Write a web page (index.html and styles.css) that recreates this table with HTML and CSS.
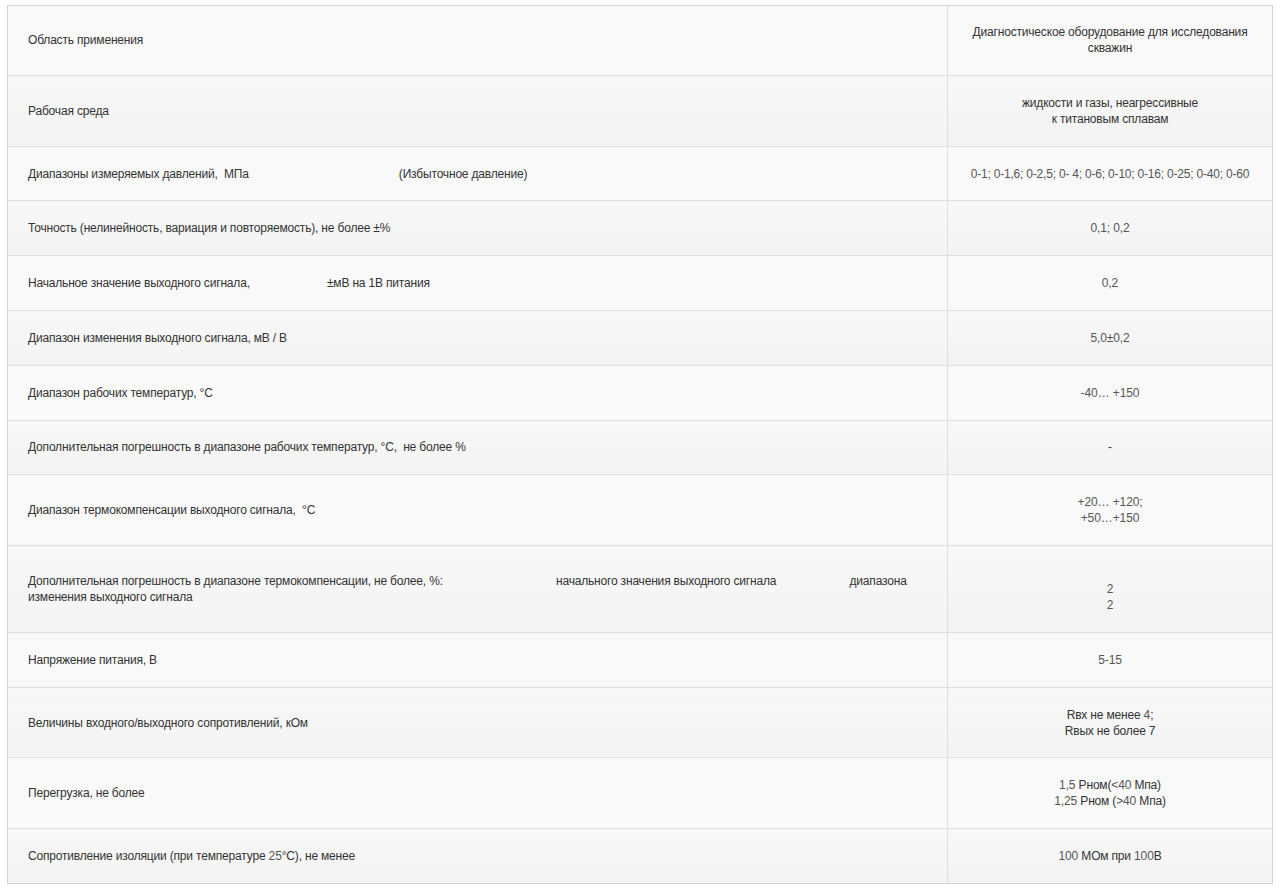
FILE: index.html
```html
<!DOCTYPE html>
<html lang="ru">
<head>
<meta charset="utf-8">
<title>Технические характеристики</title>
<link rel="stylesheet" href="styles.css">
</head>
<body>
<table class="spec">
  <tbody>
    <tr class="odd first">
      <td class="name">Область применения</td>
      <td class="val">Диагностическое оборудование для исследования скважин</td>
    </tr>
    <tr class="even">
      <td class="name">Рабочая среда</td>
      <td class="val">жидкости и газы, неагрессивные<br>к титановым сплавам</td>
    </tr>
    <tr class="odd">
      <td class="name">Диапазоны измеряемых давлений,&nbsp; МПа <span class="after g1">(Избыточное давление)</span></td>
      <td class="val"><span class="num nowrap">0-1; 0-1,6; 0-2,5; 0- 4; 0-6; 0-10; 0-16; 0-25; 0-40; 0-60</span></td>
    </tr>
    <tr class="even">
      <td class="name">Точность (нелинейность, вариация и повторяемость), не более ±%</td>
      <td class="val"><span class="num">0,1; 0,2</span></td>
    </tr>
    <tr class="odd">
      <td class="name">Начальное значение выходного сигнала, <span class="after g2">±мВ на 1В питания</span></td>
      <td class="val"><span class="num">0,2</span></td>
    </tr>
    <tr class="even">
      <td class="name">Диапазон изменения выходного сигнала, мВ / В</td>
      <td class="val"><span class="num">5,0±0,2</span></td>
    </tr>
    <tr class="odd">
      <td class="name">Диапазон рабочих температур, °С</td>
      <td class="val"><span class="num">-40… +150</span></td>
    </tr>
    <tr class="even">
      <td class="name">Дополнительная погрешность в диапазоне рабочих температур, °С,&nbsp; не более %</td>
      <td class="val">-</td>
    </tr>
    <tr class="odd">
      <td class="name">Диапазон термокомпенсации выходного сигнала,&nbsp; °С</td>
      <td class="val"><span class="num">+20… +120;<br>+50…+150</span></td>
    </tr>
    <tr class="even">
      <td class="name">Дополнительная погрешность в диапазоне термокомпенсации, не более, %: <span class="after g3">начального значения выходного сигнала</span> <span class="after g4">диапазона</span> изменения выходного сигнала</td>
      <td class="val"><br><span class="num">2<br>2</span></td>
    </tr>
    <tr class="odd">
      <td class="name">Напряжение питания, В</td>
      <td class="val"><span class="num">5-15</span></td>
    </tr>
    <tr class="even">
      <td class="name">Величины входного/выходного сопротивлений, кОм</td>
      <td class="val">Rвх не менее <span class="num">4</span>;<br>Rвых не более 7</td>
    </tr>
    <tr class="odd">
      <td class="name">Перегрузка, не более</td>
      <td class="val"><span class="num">1,5</span> Pном(<span class="num">&lt;40</span> Мпа)<br><span class="num">1,25</span> Pном (<span class="num">&gt;40</span> Мпа)</td>
    </tr>
    <tr class="even">
      <td class="name">Сопротивление изоляции (при температуре <span class="num">25</span>°С), не менее</td>
      <td class="val"><span class="num">100</span> МОм при <span class="num">100</span>В</td>
    </tr>
  </tbody>
</table>
</body>
</html>
```

FILE: styles.css
```css
html, body {
  background: #ffffff;
}

body {
  margin: 5px 7px;
  font-family: "Liberation Sans", Arial, sans-serif;
  font-size: 12px;
  line-height: 16px;
  letter-spacing: -0.18px;
  color: #333333;
}

.spec {
  width: 1266px;
  border-collapse: collapse;
  border: 1px solid #d4d4d4;
  box-shadow: 0 1px 3px rgba(0, 0, 0, 0.18);
  table-layout: fixed;
}

.spec td {
  padding: 18.9px 20px;
  border-top: 1px solid #dedede;
  vertical-align: middle;
}

.spec tr.first td {
  border-top: none;
  padding-top: 18px;
}

.spec td.name {
  width: 899px;
  text-align: left;
  border-right: 1px solid #dedede;
}

.spec td.val {
  text-align: center;
  padding-left: 18px;
  padding-right: 18px;
}

.spec tr.odd td {
  background: #f9f9f9;
}

.spec tr.even td {
  background: linear-gradient(#f8f8f8, #f3f3f3);
}

.num {
  color: #555555;
  letter-spacing: -0.1px;
}

.nowrap {
  white-space: nowrap;
  letter-spacing: -0.2px;
}

.after {
  display: inline;
}

.g1 { margin-left: 147px; }
.g2 { margin-left: 74px; }
.g3 { margin-left: 110px; }
.g4 { margin-left: 70px; }
```
